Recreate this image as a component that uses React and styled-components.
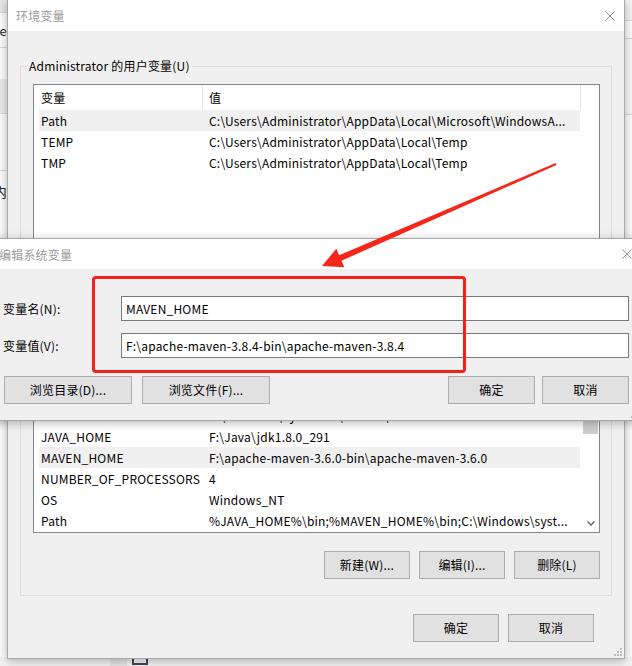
import React from "react";
import styled, { createGlobalStyle } from "styled-components";

const FONT = `"Noto Sans CJK SC", "Noto Sans", sans-serif`;

const Global = createGlobalStyle`
  html, body { margin: 0; padding: 0; }
  body {
    width: 632px; height: 666px; overflow: hidden;
    font-family: ${FONT}; font-size: 12px; color: #000;
  }
`;

const Desktop = styled.div`
  position: relative;
  width: 632px;
  height: 666px;
  overflow: hidden;
  background: #eeeeee;
  font-family: ${FONT};
  font-size: 12px;
  letter-spacing: 0.2px;
`;

/* ---------- background windows ---------- */
const BackWindow = styled.div`
  position: absolute;
  left: ${(p) => p.$x}px;
  top: ${(p) => p.$y}px;
  width: ${(p) => p.$w}px;
  height: ${(p) => p.$h}px;
  background: #fbfbfb;
  display: flex;
  flex-direction: column;
  align-items: ${(p) => (p.$right ? "flex-start" : "flex-end")};
  overflow: hidden;
`;
const BackBand = styled.div`
  width: 100%;
  height: ${(p) => p.$h}px;
  flex: none;
  background: ${(p) => p.$bg || "transparent"};
  border-bottom: ${(p) => (p.$line ? "1px solid #d6d6d6" : "none")};
  display: flex;
  align-items: center;
  justify-content: ${(p) => (p.$right ? "flex-start" : "flex-end")};
  color: #222;
  font-size: 13px;
  line-height: 1;
`;
const Taskbar = styled.div`
  position: absolute;
  left: 0;
  top: 657px;
  width: 632px;
  height: 9px;
  background: #f2f2f2;
  display: flex;
  align-items: flex-start;
  padding-left: 110px;
  gap: 5px;
  box-sizing: border-box;
`;
const TaskTile = styled.div`
  width: 17px;
  height: 9px;
  background: #e4e4e4;
`;
const TaskIcon = styled.div`
  width: 16px;
  height: 9px;
  box-sizing: border-box;
  border: 2px solid #444455;
  border-top: none;
  margin-top: -1px;
`;

/* ---------- dialogs ---------- */
const Window = styled.div`
  position: absolute;
  left: ${(p) => p.$x}px;
  top: ${(p) => p.$y}px;
  width: ${(p) => p.$w}px;
  height: ${(p) => p.$h}px;
  box-sizing: border-box;
  border: 1px solid #a9a9a9;
  background: #f0f0f0;
  box-shadow: 0 2px 9px rgba(0, 0, 0, 0.28);
  display: flex;
  flex-direction: column;
  font-family: ${FONT};
  font-size: 12px;
  color: #000;
`;
const TitleBar = styled.div`
  flex: none;
  height: ${(p) => p.$h}px;
  background: #fff;
  display: flex;
  align-items: center;
  justify-content: space-between;
  padding: 0 9px 0 ${(p) => p.$pl}px;
  color: #9b9b9b;
  font-size: 12px;
`;
const CloseIcon = () => (
  <svg width="10" height="10" viewBox="0 0 10 10">
    <path d="M0.5 0.5 L9.5 9.5 M9.5 0.5 L0.5 9.5" stroke="#8c8c8c" strokeWidth="1" fill="none" />
  </svg>
);

const MainBody = styled.div`
  flex: 1;
  display: flex;
  flex-direction: column;
  padding: 35px 12px 0 12px;
  position: relative;
`;

const Group = styled.div`
  display: flex;
  flex-direction: column;
  border: 1px solid #dcdcdc;
  padding-bottom: ${(p) => p.$pb}px;
  margin-top: ${(p) => p.$mt || 0}px;
`;
const GroupLabel = styled.div`
  align-self: flex-start;
  margin: -9px 0 0 6px;
  padding: 0 2px;
  height: 16px;
  line-height: 16px;
  background: #f0f0f0;
  color: #000;
  white-space: nowrap;
`;

const ListBox = styled.div`
  margin: 10px 0 0 12px;
  width: 567px;
  height: 175px;
  box-sizing: border-box;
  border: 1px solid #828790;
  background: #fff;
  display: flex;
  overflow: hidden;
`;
const ListMain = styled.div`
  flex: 1;
  min-width: 0;
  display: flex;
  flex-direction: column;
`;
const HeaderRow = styled.div`
  flex: none;
  height: 25px;
  display: flex;
  padding-left: 5px;
`;
const HeaderCell = styled.div`
  flex: none;
  width: ${(p) => p.$w}px;
  box-sizing: border-box;
  border-right: 1px solid #e5e5e5;
  padding-left: ${(p) => p.$pl}px;
  display: flex;
  align-items: center;
  line-height: 16px;
`;
const DataRow = styled.div`
  flex: none;
  margin-left: 5px;
  width: 541px;
  height: 21px;
  display: grid;
  grid-template-columns: 168px 1fr;
  align-items: center;
  background: ${(p) => (p.$selected ? "#f0f0f0" : "transparent")};
`;
const Cell = styled.div`
  padding-left: 2px;
  white-space: nowrap;
  overflow: hidden;
  line-height: 16px;
`;
const ScrollBar = styled.div`
  flex: none;
  width: 17px;
  display: flex;
  flex-direction: column;
  background: #fff;
`;
const ScrollArrow = styled.div`
  flex: none;
  height: 17px;
  display: flex;
  align-items: center;
  justify-content: center;
`;
const ScrollThumb = styled.div`
  flex: none;
  height: 58px;
  margin: 0 1px;
  background: #cdcdcd;
`;
const ScrollSpace = styled.div`
  flex: 1;
`;

const ButtonRow = styled.div`
  display: flex;
  justify-content: ${(p) => p.$justify || "flex-end"};
  gap: ${(p) => p.$gap || 9}px;
  margin-top: ${(p) => p.$mt}px;
  padding-right: ${(p) => p.$pr || 0}px;
  padding-left: ${(p) => p.$pl || 0}px;
`;
const ButtonGroup = styled.div`
  display: flex;
  gap: ${(p) => p.$gap}px;
`;
const Button = styled.div`
  flex: none;
  width: ${(p) => p.$w || 86}px;
  height: 28px;
  box-sizing: border-box;
  border: 1px solid #adadad;
  background: #e1e1e1;
  display: flex;
  align-items: center;
  justify-content: center;
  line-height: 16px;
  white-space: nowrap;
`;

const Grip = styled.svg`
  position: absolute;
  right: 2px;
  bottom: 2px;
`;

/* ---------- edit dialog ---------- */
const EditBody = styled.div`
  flex: 1;
  display: flex;
  flex-direction: column;
  padding: 27px 12px 16px 11px;
  position: relative;
`;
const FormRow = styled.div`
  display: grid;
  grid-template-columns: 118px 1fr;
  align-items: center;
  margin-top: ${(p) => p.$mt || 0}px;
`;
const FieldLabel = styled.div`
  line-height: 16px;
  white-space: nowrap;
`;
const Field = styled.div`
  height: 25px;
  box-sizing: border-box;
  border: 1px solid #7a7a7a;
  background: #fff;
  padding-left: 4px;
  display: flex;
  align-items: center;
  line-height: 16px;
  white-space: nowrap;
  overflow: hidden;
`;

/* ---------- annotations ---------- */
const Highlight = styled.div`
  position: absolute;
  left: 92px;
  top: 276px;
  width: 374px;
  height: 97px;
  box-sizing: border-box;
  border: 3px solid #f2211b;
  border-radius: 4px;
`;
const ArrowSvg = styled.svg`
  position: absolute;
  left: 0;
  top: 0;
  pointer-events: none;
`;

const ResizeGrip = () => (
  <Grip width="8" height="8" viewBox="0 0 8 8">
    {[
      [6, 0],
      [6, 3],
      [3, 3],
      [6, 6],
      [3, 6],
      [0, 6],
    ].map(([x, y], i) => (
      <rect key={i} x={x} y={y} width="2" height="2" fill="#bcbcbc" />
    ))}
  </Grip>
);

const userVars = [
  ["Path", "C:\\Users\\Administrator\\AppData\\Local\\Microsoft\\WindowsA...", true],
  ["TEMP", "C:\\Users\\Administrator\\AppData\\Local\\Temp"],
  ["TMP", "C:\\Users\\Administrator\\AppData\\Local\\Temp"],
];

const sysVars = [
  ["ComSpec", "C:\\Windows\\system32\\cmd.exe"],
  ["DriverData", "C:\\Windows\\System32\\Drivers\\DriverData"],
  ["JAVA_HOME", "F:\\Java\\jdk1.8.0_291"],
  ["MAVEN_HOME", "F:\\apache-maven-3.6.0-bin\\apache-maven-3.6.0", true],
  ["NUMBER_OF_PROCESSORS", "4"],
  ["OS", "Windows_NT"],
  ["Path", "%JAVA_HOME%\\bin;%MAVEN_HOME%\\bin;C:\\Windows\\syst..."],
];

function VarList({ rows, scroll }) {
  return (
    <ListBox>
      <ListMain>
        <HeaderRow>
          <HeaderCell $w={164} $pl={2}>变量</HeaderCell>
          <HeaderCell $w={378} $pl={6}>值</HeaderCell>
        </HeaderRow>
        {rows.map(([k, v, sel]) => (
          <DataRow key={k + v} $selected={sel}>
            <Cell>{k}</Cell>
            <Cell>{v}</Cell>
          </DataRow>
        ))}
      </ListMain>
      {scroll && (
        <ScrollBar>
          <ScrollArrow />
          <ScrollThumb />
          <ScrollSpace />
          <ScrollArrow>
            <svg width="8" height="5" viewBox="0 0 8 5">
              <path d="M0.5 0.5 L4 4 L7.5 0.5" stroke="#606060" strokeWidth="1.3" fill="none" />
            </svg>
          </ScrollArrow>
        </ScrollBar>
      )}
    </ListBox>
  );
}

export default function App() {
  return (
    <Desktop>
      <Global />
      <BackWindow $x={-300} $y={0} $w={307} $h={660}>
        <BackBand $h={12} $bg="#e6e6e6" $line />
        <BackBand $h={34} $line>e</BackBand>
        <BackBand $h={31} />
        <BackBand $h={34} $bg="#e9e9e9" $line />
        <BackBand $h={56} $line />
        <BackBand $h={40}>内</BackBand>
      </BackWindow>
      <BackWindow $x={625} $y={0} $w={40} $h={660} $right>
        <BackBand $h={20} $bg="#f3f3f3" $line $right />
        <BackBand $h={17} $line $right />
        <BackBand $h={75} $bg="#f6f6f6" $line $right />
      </BackWindow>
      <Taskbar>
        <TaskTile />
        <TaskIcon />
      </Taskbar>

      <Window $x={7} $y={-1} $w={618} $h={660}>
        <TitleBar $h={31} $pl={8}>
          <span>环境变量</span>
          <CloseIcon />
        </TitleBar>
        <MainBody>
          <Group $pb={16}>
            <GroupLabel>Administrator 的用户变量(U)</GroupLabel>
            <VarList rows={userVars} />
            <ButtonRow $mt={18} $pr={11}>
              <Button>新建(N)...</Button>
              <Button>编辑(E)...</Button>
              <Button>删除(D)</Button>
            </ButtonRow>
          </Group>
          <Group $pb={16} $mt={18}>
            <GroupLabel>系统变量(S)</GroupLabel>
            <VarList rows={sysVars} scroll />
            <ButtonRow $mt={18} $pr={11}>
              <Button>新建(W)...</Button>
              <Button>编辑(I)...</Button>
              <Button>删除(L)</Button>
            </ButtonRow>
          </Group>
          <ButtonRow $mt={18} $pr={18}>
            <Button>确定</Button>
            <Button>取消</Button>
          </ButtonRow>
          <ResizeGrip />
        </MainBody>
      </Window>

      <Window $x={-9} $y={238} $w={651} $h={183}>
        <TitleBar $h={30} $pl={7}>
          <span>编辑系统变量</span>
          <CloseIcon />
        </TitleBar>
        <EditBody>
          <FormRow>
            <FieldLabel>变量名(N):</FieldLabel>
            <Field>MAVEN_HOME</Field>
          </FormRow>
          <FormRow $mt={12}>
            <FieldLabel>变量值(V):</FieldLabel>
            <Field>F:\apache-maven-3.8.4-bin\apache-maven-3.8.4</Field>
          </FormRow>
          <ButtonRow $mt={18} $justify="space-between" $pl={1}>
            <ButtonGroup $gap={10}>
              <Button $w={128}>浏览目录(D)...</Button>
              <Button $w={128}>浏览文件(F)...</Button>
            </ButtonGroup>
            <ButtonGroup $gap={7}>
              <Button $w={87}>确定</Button>
              <Button $w={87}>取消</Button>
            </ButtonGroup>
          </ButtonRow>
          <ResizeGrip />
        </EditBody>
      </Window>

      <Highlight />
      <ArrowSvg width="632" height="666" viewBox="0 0 632 666">
        <polygon
          points="555.6,163.1 339.1,255.25 336.3,248.8 322,266 344.3,267.2 341.5,260.75 556.4,164.9"
          fill="#f5271d"
        />
      </ArrowSvg>
    </Desktop>
  );
}
